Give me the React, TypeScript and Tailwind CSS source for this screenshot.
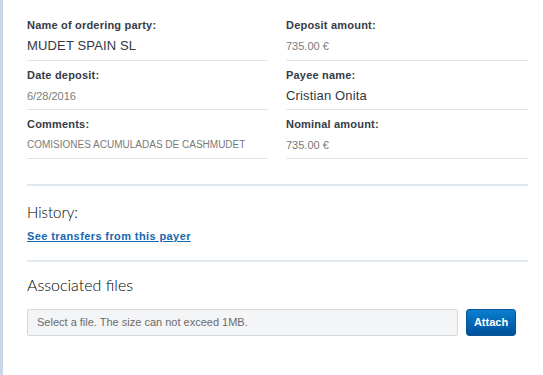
export default function App() {
  const left = [
    { label: "Name of ordering party:", value: "MUDET SPAIN SL", big: true },
    { label: "Date deposit:", value: "6/28/2016" },
    { label: "Comments:", value: "COMISIONES ACUMULADAS DE CASHMUDET", small: true },
  ];
  const right = [
    { label: "Deposit amount:", value: "735.00 €" },
    { label: "Payee name:", value: "Cristian Onita", big: true },
    { label: "Nominal amount:", value: "735.00 €" },
  ];
  const rows = left.flatMap((l, i) => [l, right[i]]);

  return (
    <div className="flex min-h-[375px] w-[543px] bg-white font-['Liberation_Sans',Arial,sans-serif]">
      <div className="w-[3px] shrink-0 bg-[#cbd5e8]" />
      <div className="w-[525px] pl-[24px] pt-[11px]">
        <div className="grid grid-cols-[241px_242px] gap-x-[18px]">
          {rows.map((r, i) => (
            <div
              key={i}
              className={`border-b border-[#e4e4e4] pt-[6px] ${i < 2 ? "pb-[4px]" : "pb-[3px]"}`}
            >
              <div className="text-[11px] leading-[16px] font-bold tracking-[0.2px] text-[#363b45]">{r.label}</div>
              <div
                className={`mt-[3px] leading-[20px] ${
                  r.big
                    ? "text-[13px] tracking-[0.15px] text-[#333840]"
                    : r.small
                      ? "text-[10px] text-[#7a7a7a]"
                      : "text-[11px] text-[#7a7a7a]"
                }`}
              >
                {r.value}
              </div>
            </div>
          ))}
        </div>

        <div className="mt-[25px] h-[2px] bg-[#e2e8ef]" />

        <div className="pt-[16px] pb-[16px]">
          <h2 className="font-['Lato',sans-serif] text-[15px] font-light leading-[20px] text-black">History:</h2>
          <a
            href="#"
            className="mt-[6px] block text-[11px] font-bold leading-[16px] tracking-[0.4px] text-[#1766b0] underline"
          >
            See transfers from this payer
          </a>
        </div>

        <div className="h-[2px] bg-[#e2e8ef]" />

        <h2 className="mt-[12px] font-['Lato',sans-serif] text-[16px] font-light leading-[22px] text-black">
          Associated files
        </h2>

        <div className="mt-[13px] flex items-center gap-[8px]">
          <div className="flex h-[27px] w-[431px] items-center rounded-[2px] border border-[#d6d8db] bg-[#f4f5f7] pl-[9px] text-[11px] text-[#6b6b6b]">
            Select a file. The size can not exceed 1MB.
          </div>
          <button className="h-[27px] w-[50px] rounded-[3px] border border-[#0a5596] bg-gradient-to-b from-[#0a7fcf] to-[#00509a] text-[11px] font-bold text-white">
            Attach
          </button>
        </div>
      </div>
    </div>
  );
}
